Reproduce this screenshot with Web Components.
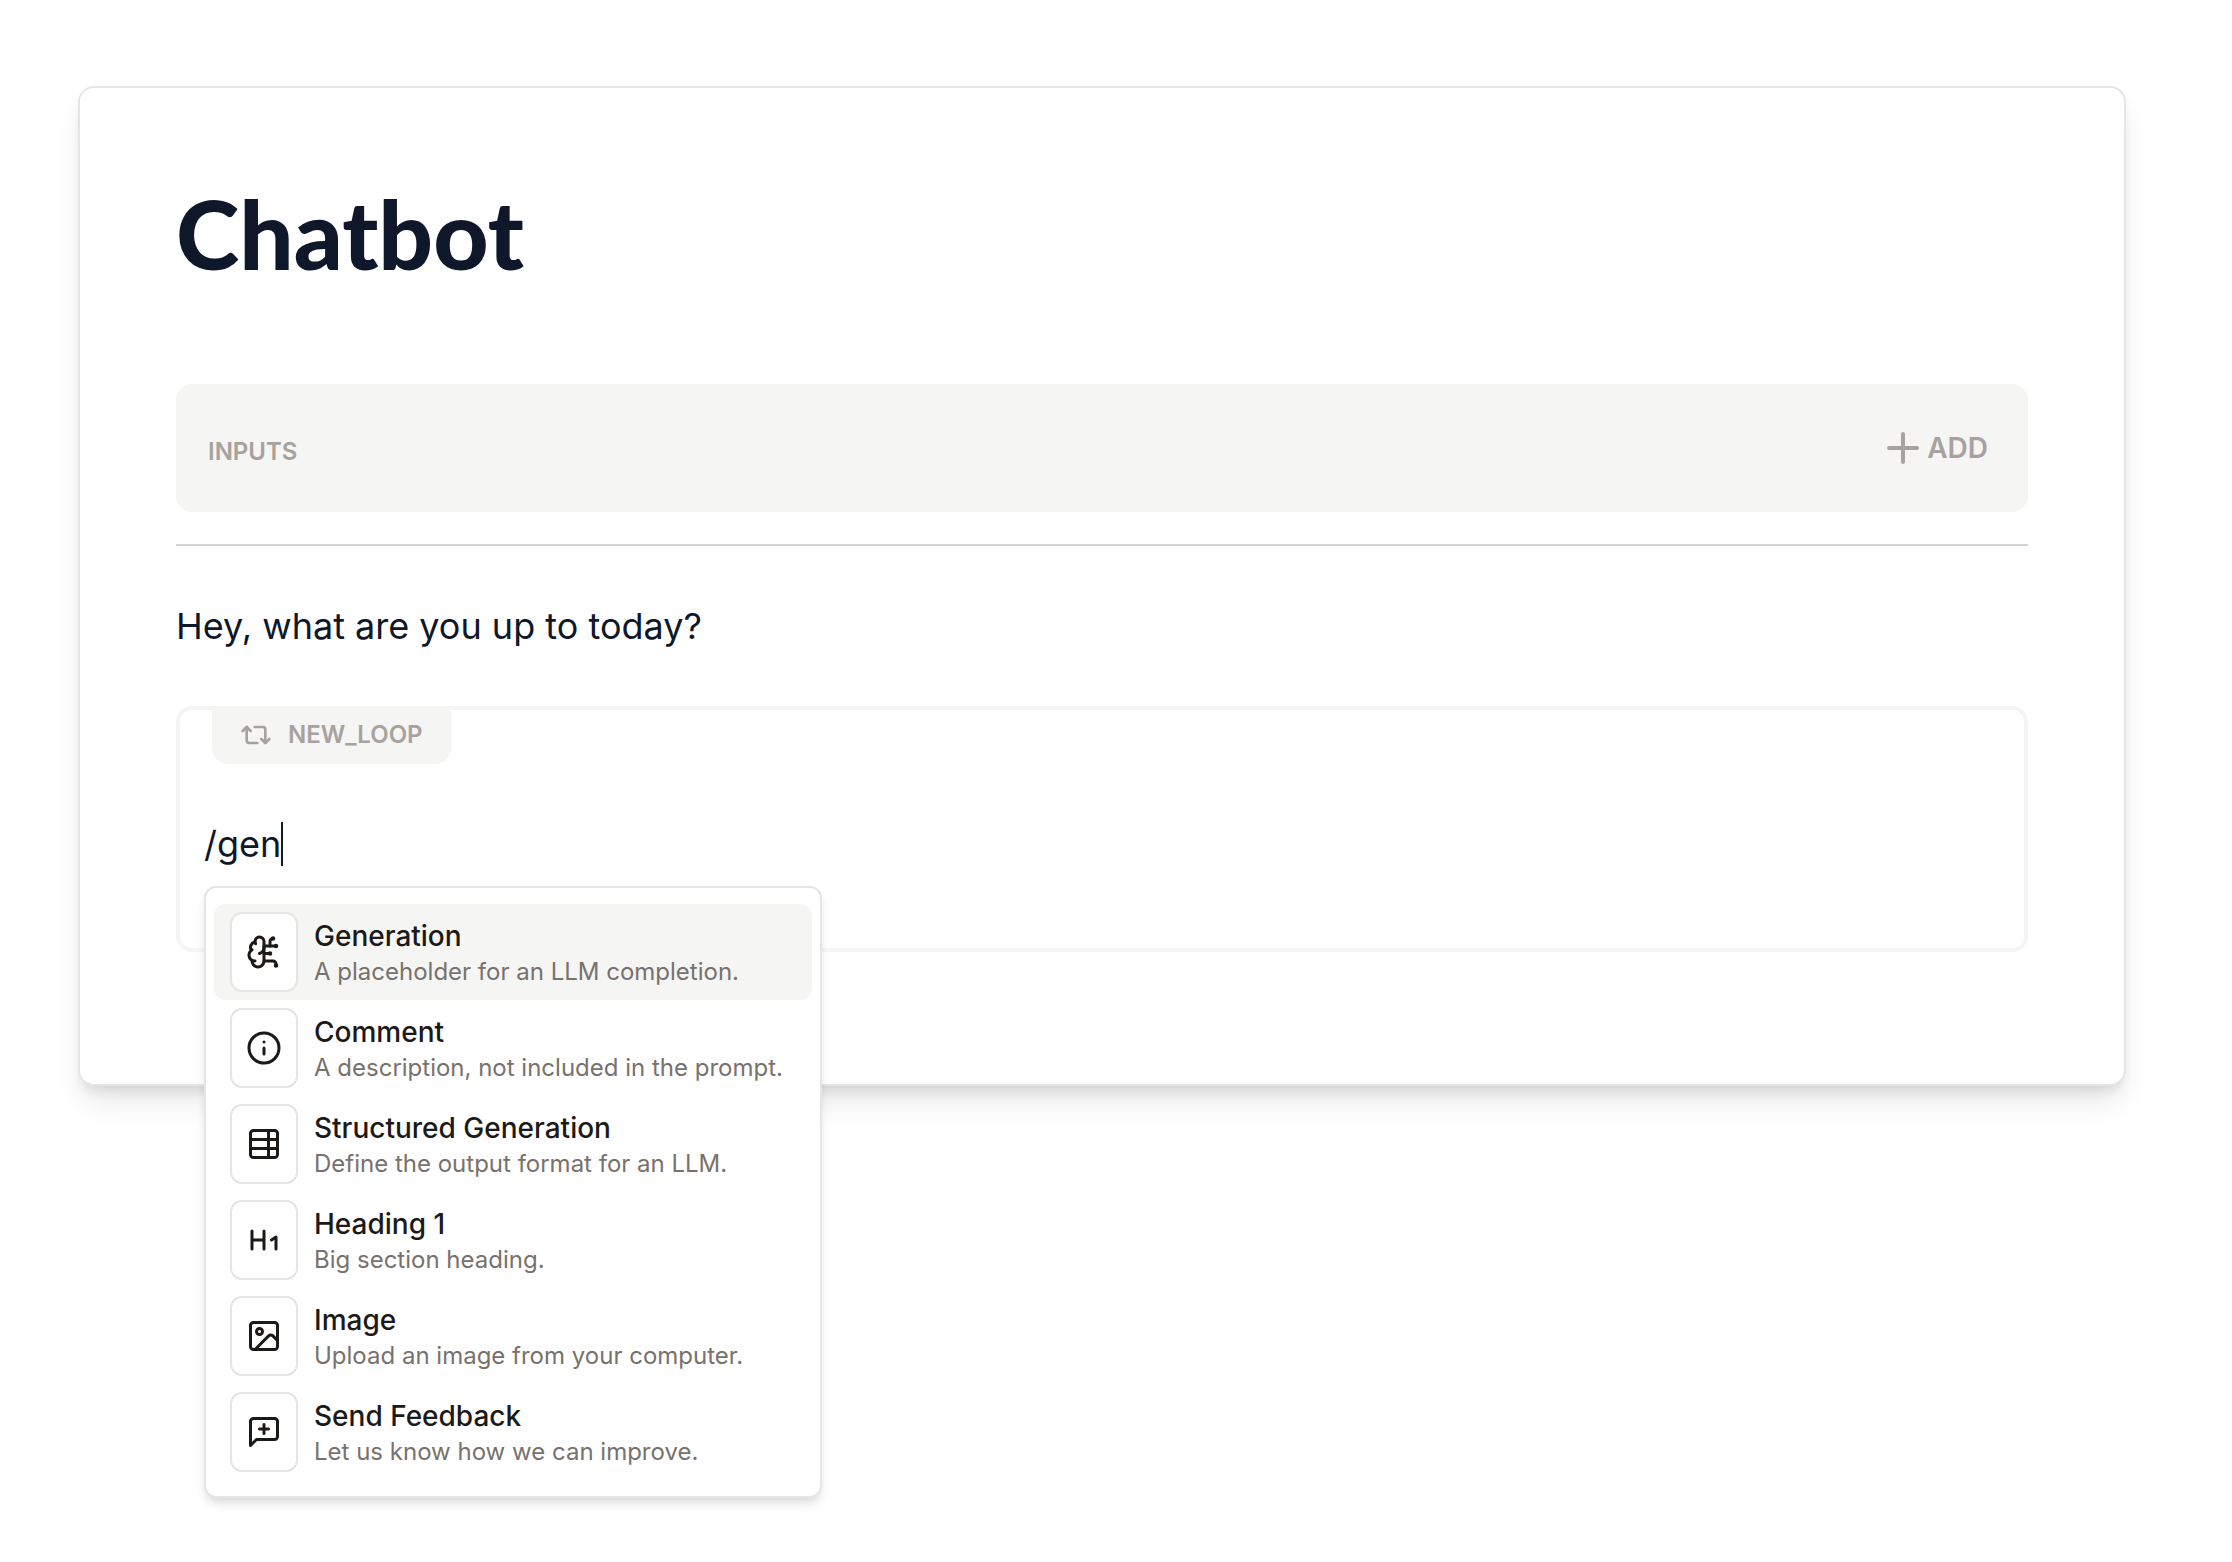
<!DOCTYPE html>
<html lang="en">
<head>
<meta charset="utf-8">
<title>Chatbot</title>
<style>
  body { margin: 0; background: #fff; color: #0f172a; font-family: Inter, "Liberation Sans", sans-serif; }
</style>
</head>
<body>
<prompt-page>
  <prompt-card heading="Chatbot">
    <inputs-bar></inputs-bar>
    <prompt-text>Hey, what are you up to today?</prompt-text>
    <loop-block name="NEW_LOOP">
      <command-input value="/gen">
        <command-menu>
          <command-item icon="brain" label="Generation" selected>A placeholder for an LLM completion.</command-item>
          <command-item icon="info" label="Comment">A description, not included in the prompt.</command-item>
          <command-item icon="table" label="Structured Generation">Define the output format for an LLM.</command-item>
          <command-item icon="heading" label="Heading 1">Big section heading.</command-item>
          <command-item icon="image" label="Image">Upload an image from your computer.</command-item>
          <command-item icon="feedback" label="Send Feedback">Let us know how we can improve.</command-item>
        </command-menu>
      </command-input>
    </loop-block>
  </prompt-card>
</prompt-page>
<script>
const ICONS = {
  plus: '<path d="M5 12h14M12 5v14"/>',
  repeat: '<path d="m2 9 3-3 3 3"/><path d="M13 18H7a2 2 0 0 1-2-2V6"/><path d="m22 15-3 3-3-3"/><path d="M11 6h6a2 2 0 0 1 2 2v10"/>',
  brain: '<path d="M12 5a3 3 0 1 0-5.997.125 4 4 0 0 0-2.526 5.77 4 4 0 0 0 .556 6.588A4 4 0 1 0 12 18Z"/><path d="M9 13a4.5 4.5 0 0 0 3-4"/><path d="M6.003 5.125A3 3 0 0 0 6.401 6.5"/><path d="M3.477 10.896a4 4 0 0 1 .585-.396"/><path d="M6 18a4 4 0 0 1-1.967-.516"/><path d="M12 13h4"/><path d="M12 18h6a2 2 0 0 1 2 2v1"/><path d="M12 8h8"/><path d="M16 8V5a2 2 0 0 1 2-2"/><circle cx="16" cy="13" r=".5"/><circle cx="18" cy="3" r=".5"/><circle cx="20" cy="21" r=".5"/><circle cx="20" cy="8" r=".5"/>',
  info: '<circle cx="12" cy="12" r="10"/><path d="M12 16v-4M12 8h.01"/>',
  table: '<rect x="3" y="3" width="18" height="18" rx="2"/><path d="M15 3v18M21 9H3M21 15H3"/>',
  heading: '<path d="M4 12h8M4 18V6M12 18V6M17 12l3-2v8"/>',
  image: '<rect x="3" y="3" width="18" height="18" rx="2"/><circle cx="9" cy="9" r="2"/><path d="m21 15-3.086-3.086a2 2 0 0 0-2.828 0L6 21"/>',
  feedback: '<path d="M21 15a2 2 0 0 1-2 2H7l-4 4V5a2 2 0 0 1 2-2h14a2 2 0 0 1 2 2z"/><path d="M12 7v6M9 10h6"/>'
};

class Base extends HTMLElement {
  connectedCallback() {
    if (this.shadowRoot) return;
    this.attachShadow({ mode: 'open' }).innerHTML =
      `<style>*{box-sizing:border-box}:host{box-sizing:border-box;display:block}${this.css()}</style>${this.html()}`;
  }
  css() { return ''; }
  html() { return '<slot></slot>'; }
}

customElements.define('line-icon', class extends Base {
  css() { return `:host{display:block;flex:none;width:var(--icon-size,36px);height:var(--icon-size,36px)}
    svg{display:block;width:100%;height:100%}`; }
  html() { return `<svg viewBox="0 0 24 24" fill="none" stroke="currentColor" stroke-width="2" stroke-linecap="round" stroke-linejoin="round" aria-hidden="true">${ICONS[this.getAttribute('name')]}</svg>`; }
});

customElements.define('prompt-page', class extends Base {
  css() { return `:host{min-height:100vh;padding:86px 106px 64px 78px}`; }
});

customElements.define('prompt-card', class extends Base {
  css() { return `
    article{padding:96px 96px 132px;border:2px solid #e5e5e5;border-radius:16px;background:#fff;
      box-shadow:0 20px 30px -6px rgb(0 0 0/.1),0 8px 12px -4px rgb(0 0 0/.1)}
    h1{margin:0 0 102px;font:900 96px/98px Lato,Inter,sans-serif}`; }
  html() { return `<article><h1>${this.getAttribute('heading')}</h1><slot></slot></article>`; }
});

customElements.define('inputs-bar', class extends Base {
  css() { return `
    :host{padding-bottom:32px;border-bottom:2px solid #d6d3d1;color:#a8a29e}
    section{display:flex;align-items:center;justify-content:space-between;height:128px;padding:0 40px 0 32px;border-radius:16px;background:#f5f5f4}
    h2{margin:0;padding-top:8px;font-size:24px;line-height:32px;font-weight:600}
    button{display:flex;align-items:center;padding:0;border:0;background:none;color:inherit;font:600 28px/40px Inter,sans-serif;cursor:pointer;--icon-size:48px}`; }
  html() { return `<section><h2>INPUTS</h2><button type="button"><line-icon name="plus"></line-icon>ADD</button></section>`; }
});

customElements.define('prompt-text', class extends Base {
  css() { return `p{margin:48px 0;font-size:36px;line-height:64px}`; }
  html() { return `<p><slot></slot></p>`; }
});

customElements.define('loop-block', class extends Base {
  css() { return `
    section{height:246px;padding:0 24px;border:4px solid #f5f5f4;border-radius:16px}
    header{display:flex;align-items:center;gap:16px;width:fit-content;height:54px;margin-left:8px;padding:0 28px 4px;border-radius:0 0 16px 16px;
      background:#f5f5f4;color:#a8a29e;--icon-size:32px}
    h2{margin:0;font-size:24px;line-height:32px;font-weight:600}`; }
  html() { return `<section><header><line-icon name="repeat"></line-icon><h2>${this.getAttribute('name')}</h2></header><slot></slot></section>`; }
});

customElements.define('command-input', class extends Base {
  css() { return `
    :host{position:relative;margin-top:48px}
    label{display:flex;align-items:center;height:64px}
    input{field-sizing:content;padding:0;border:0;outline:0;background:none;color:inherit;font:400 36px/64px Inter,sans-serif}
    i{width:2px;height:44px;background:#0f172a}`; }
  html() { return `<label><input type="text" aria-label="Prompt" value="${this.getAttribute('value')}"><i></i></label><slot></slot>`; }
});

customElements.define('command-menu', class extends Base {
  css() { return `
    :host{position:absolute;top:100%;left:0;z-index:1;width:618px;margin-top:10px;padding:16px 8px;border:2px solid #e5e5e5;border-radius:12px;background:#fff;
      box-shadow:0 8px 12px -2px rgb(0 0 0/.1),0 4px 8px -4px rgb(0 0 0/.1)}`; }
});

customElements.define('command-item', class extends Base {
  css() { return `
    button{display:flex;align-items:center;gap:16px;width:100%;height:96px;padding:8px 16px;border:0;border-radius:12px;background:none;color:#1c1917;
      font:inherit;text-align:left;cursor:pointer}
    :host([selected]) button{background:#f5f5f4}
    .tile{display:flex;align-items:center;justify-content:center;flex:none;width:68px;height:80px;border:2px solid #e5e5e5;border-radius:12px;background:#fff}
    .text{display:flex;flex-direction:column;white-space:nowrap}
    b{font-size:28px;line-height:40px;font-weight:500}
    span{font-size:24px;line-height:32px;color:#78716c}`; }
  html() { return `<button type="button"><div class="tile"><line-icon name="${this.getAttribute('icon')}"></line-icon></div><div class="text"><b>${this.getAttribute('label')}</b><span><slot></slot></span></div></button>`; }
});
</script>
</body>
</html>
